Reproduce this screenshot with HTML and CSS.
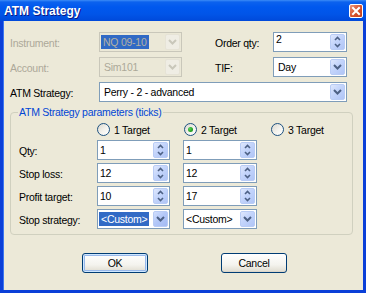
FILE: index.html
```html
<!DOCTYPE html>
<html lang="en">
<head>
    <meta charset="UTF-8">
    <meta name="viewport" content="width=device-width, initial-scale=1.0">
    <title>ATM Strategy</title>
    <link rel="stylesheet" href="styles.css">
</head>
<body>
    <div class="window">
        <!-- Title bar -->
        <div class="titlebar">
            <span class="title">ATM Strategy</span>
            <span class="close">
                <svg width="14" height="14" viewBox="0 0 14 14"><path d="M4 4 L10 10 M10 4 L4 10" stroke="#fff" stroke-width="2" stroke-linecap="square"/></svg>
            </span>
        </div>

        <div class="client">
            <!-- Top fields -->
            <div class="top-grid">
                <span class="lbl disabled">Instrument:</span>
                <div class="combo disabled">
                    <span class="val tight"><span class="sel">NQ 09-10</span></span>
                    <span class="dd"><svg width="15" height="16"><path d="M4 6 L7.5 9.5 L11 6" stroke="#C9C7BA" stroke-width="2" fill="none"/></svg></span>
                </div>
                <span></span>
                <span class="lbl">Order qty:</span>
                <div class="spin">
                    <span class="val top">2</span>
                    <span class="sb"><svg width="15" height="16"><path d="M5 6 L7.5 3.5 L10 6 M5 10 L7.5 12.5 L10 10" stroke="#4D6185" stroke-width="1.6" fill="none"/></svg></span>
                </div>

                <span class="lbl disabled">Account:</span>
                <div class="combo disabled">
                    <span class="val">Sim101</span>
                    <span class="dd"><svg width="15" height="16"><path d="M4 6 L7.5 9.5 L11 6" stroke="#C9C7BA" stroke-width="2" fill="none"/></svg></span>
                </div>
                <span></span>
                <span class="lbl">TIF:</span>
                <div class="combo">
                    <span class="val">Day</span>
                    <span class="dd"><svg width="15" height="16"><path d="M4 6 L7.5 9.5 L11 6" stroke="#4D6185" stroke-width="2" fill="none"/></svg></span>
                </div>

                <span class="lbl">ATM Strategy:</span>
                <div class="combo wide">
                    <span class="val">Perry - 2 - advanced</span>
                    <span class="dd"><svg width="15" height="16"><path d="M4 6 L7.5 9.5 L11 6" stroke="#4D6185" stroke-width="2" fill="none"/></svg></span>
                </div>
            </div>

            <!-- Strategy parameters group -->
            <fieldset class="params">
                <legend>ATM Strategy parameters (ticks)</legend>
                <div class="pgrid">
                    <span></span>
                    <span class="radio"><span class="circle"></span>1 Target</span>
                    <span></span>
                    <span class="radio r2"><span class="circle on"></span>2 Target</span>
                    <span></span>
                    <span class="radio"><span class="circle"></span>3 Target</span>

                    <span class="lbl">Qty:</span>
                    <div class="spin"><span class="val">1</span><span class="sb"><svg width="15" height="16"><path d="M5 6 L7.5 3.5 L10 6 M5 10 L7.5 12.5 L10 10" stroke="#4D6185" stroke-width="1.6" fill="none"/></svg></span></div>
                    <span></span>
                    <div class="spin"><span class="val">1</span><span class="sb"><svg width="15" height="16"><path d="M5 6 L7.5 3.5 L10 6 M5 10 L7.5 12.5 L10 10" stroke="#4D6185" stroke-width="1.6" fill="none"/></svg></span></div>
                    <span></span><span></span>

                    <span class="lbl">Stop loss:</span>
                    <div class="spin"><span class="val">12</span><span class="sb"><svg width="15" height="16"><path d="M5 6 L7.5 3.5 L10 6 M5 10 L7.5 12.5 L10 10" stroke="#4D6185" stroke-width="1.6" fill="none"/></svg></span></div>
                    <span></span>
                    <div class="spin"><span class="val">12</span><span class="sb"><svg width="15" height="16"><path d="M5 6 L7.5 3.5 L10 6 M5 10 L7.5 12.5 L10 10" stroke="#4D6185" stroke-width="1.6" fill="none"/></svg></span></div>
                    <span></span><span></span>

                    <span class="lbl">Profit target:</span>
                    <div class="spin"><span class="val">10</span><span class="sb"><svg width="15" height="16"><path d="M5 6 L7.5 3.5 L10 6 M5 10 L7.5 12.5 L10 10" stroke="#4D6185" stroke-width="1.6" fill="none"/></svg></span></div>
                    <span></span>
                    <div class="spin"><span class="val">17</span><span class="sb"><svg width="15" height="16"><path d="M5 6 L7.5 3.5 L10 6 M5 10 L7.5 12.5 L10 10" stroke="#4D6185" stroke-width="1.6" fill="none"/></svg></span></div>
                    <span></span><span></span>

                    <span class="lbl">Stop strategy:</span>
                    <div class="combo small">
                        <span class="val tight"><span class="sel">&lt;Custom&gt;</span></span>
                        <span class="dd hot"><svg width="15" height="16"><path d="M4 6 L7.5 9.5 L11 6" stroke="#4D6185" stroke-width="2" fill="none"/></svg></span>
                    </div>
                    <span></span>
                    <div class="combo small">
                        <span class="val">&lt;Custom&gt;</span>
                        <span class="dd"><svg width="15" height="16"><path d="M4 6 L7.5 9.5 L11 6" stroke="#4D6185" stroke-width="2" fill="none"/></svg></span>
                    </div>
                    <span></span><span></span>
                </div>
            </fieldset>

            <!-- Dialog buttons -->
            <div class="actions">
                <button class="btn default">OK</button>
                <button class="btn">Cancel</button>
            </div>
        </div>
    </div>
</body>
</html>
```

FILE: styles.css
```css
/* Whole page is the dialog window */
body {
    margin: 0;
    font-family: "Liberation Sans", Arial, sans-serif;
    font-size: 10.5px;
    letter-spacing: -0.25px;
    color: #000;
    background: #0A3FD8;
}

.window {
    width: 366px;
    height: 293px;
    display: flex;
    flex-direction: column;
}

/* XP blue title bar */
.titlebar {
    height: 21px;
    flex: none;
    display: flex;
    align-items: center;
    justify-content: space-between;
    padding: 0 3px 0 4px;
    background: linear-gradient(to bottom, #3C8CF7 0, #0C62EE 2px, #0058EE 7px, #0155E8 14px, #0049DA 21px);
}

.title {
    color: #fff;
    font-weight: bold;
    font-size: 12px;
    letter-spacing: 0;
    text-shadow: 1px 1px #0A1883;
}

.close {
    width: 14px;
    height: 14px;
    display: flex;
    border: 1px solid #fff;
    border-radius: 2px;
    box-sizing: border-box;
    background: linear-gradient(135deg, #E9977F 0%, #D6532F 50%, #C2401B 100%);
}
.close svg {
    margin: -1px;
}

/* Dialog body */
.client {
    flex: 1;
    margin: 0 3px 3px 3px;
    background: #ECE9D8;
    padding: 11px 0 0 7px;
    box-shadow: inset 1px 0 #3C76F0;
}

.top-grid {
    display: grid;
    grid-template-columns: 89px 83px 33px 58px 74px;
    grid-template-rows: 20px 20px 20px;
    row-gap: 5px;
    align-items: center;
}

.lbl {
    padding-top: 1px;
    white-space: nowrap;
}
.lbl.disabled {
    color: #ACA899;
}

/* Combo boxes and spinners */
.combo, .spin {
    height: 20px;
    box-sizing: border-box;
    border: 1px solid #7F9DB9;
    background: #fff;
    display: flex;
    align-items: center;
}
.combo.wide {
    grid-column: 2 / 6;
}
.combo.disabled {
    border-color: #C9C7BA;
    background: #EBE8D7;
    color: #ACA899;
}

.val {
    flex: 1;
    padding-left: 4px;
    white-space: nowrap;
}
.val.tight {
    padding-left: 1px;
}
.val.top {
    align-self: flex-start;
    padding: 0 0 0 2px;
}
.spin .val {
    padding-left: 2px;
}
.small .val {
    padding-left: 2px;
}
.small .val.tight {
    padding-left: 1px;
}

.sel {
    background: #316AC5;
    color: #fff;
    padding: 1px 2px;
}
.disabled .sel {
    color: #B4B1A3;
}

.dd, .sb {
    width: 15px;
    height: 16px;
    margin-right: 1px;
    border: 1px solid #B9CCF5;
    border-radius: 2px;
    box-sizing: border-box;
    background: linear-gradient(135deg, #DFE8FD 0%, #C3D4FB 45%, #B0C5F6 100%);
    display: flex;
}
.dd svg, .sb svg {
    margin: -1px;
}
.dd.hot {
    background: linear-gradient(135deg, #D2DFFD 0%, #B4C8F8 45%, #A3BAF3 100%);
}
.disabled .dd {
    background: #EFEDE4;
    border-color: #E6E3D6;
}

/* Group box */
.params {
    margin: 3px 0 0 0;
    width: 343px;
    box-sizing: border-box;
    border: 1px solid #D0D0BF;
    border-radius: 4px;
    padding: 5px 0 5px 8px;
}
.params legend {
    color: #0046D5;
    line-height: 14px;
    padding: 0 1px;
    margin-left: -1px;
}

.pgrid {
    display: grid;
    grid-template-columns: 78px 73px 13px 74px 14px auto;
    grid-template-rows: 13px 20px 20px 20px 20px;
    row-gap: 3px;
    align-items: center;
}

/* Radio buttons */
.radio {
    display: flex;
    align-items: center;
    gap: 4px;
    margin-bottom: 2px;
    white-space: nowrap;
}
.radio.r2 {
    margin-left: 1px;
}
.circle {
    width: 13px;
    height: 13px;
    box-sizing: border-box;
    border: 1px solid #1C5180;
    border-radius: 50%;
    background: linear-gradient(135deg, #DCD8CE 0%, #F4F3EE 55%, #FFFFFF 100%);
    display: flex;
    align-items: center;
    justify-content: center;
}
.circle.on::after {
    content: "";
    width: 5px;
    height: 5px;
    border-radius: 50%;
    background: radial-gradient(circle at 35% 35%, #5BD35B, #21A121 60%, #1B8A1B);
}

/* OK / Cancel */
.actions {
    display: flex;
    gap: 73px;
    margin: 18px 0 0 72px;
}
.btn {
    width: 66px;
    height: 20px;
    padding: 0;
    font-family: "Liberation Sans", Arial, sans-serif;
    font-size: 10.5px;
    letter-spacing: -0.25px;
    color: #000;
    border: 1px solid #003C74;
    border-radius: 3px;
    background: linear-gradient(to bottom, #FFFFFF 0%, #F4F3EE 60%, #E3E0D5 92%, #D6D0C5 100%);
}
.btn.default {
    box-shadow: inset 0 0 0 1px #CEE7FF, inset 0 0 0 2px #98B8EA;
}
```
